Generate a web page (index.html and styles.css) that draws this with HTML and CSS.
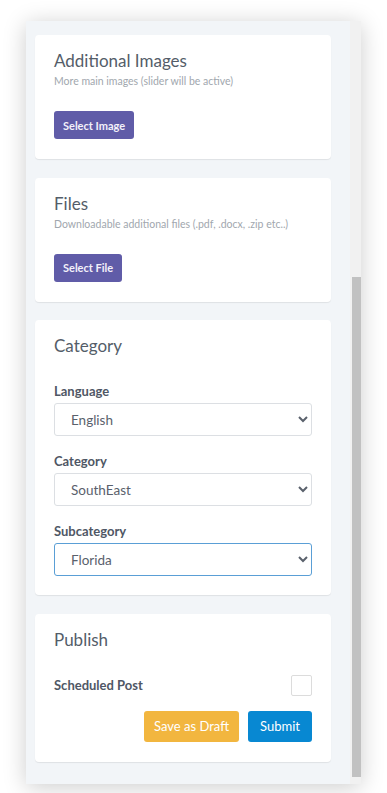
FILE: index.html
```html
<!DOCTYPE html>
<html lang="en">
<head>
<meta charset="utf-8">
<title>Post editor sidebar</title>
<link rel="stylesheet" href="styles.css">
</head>
<body>
<div class="frame">
  <div class="content">
    <section class="card">
      <h2 class="card-title">Additional Images</h2>
      <p class="card-sub">More main images (slider will be active)</p>
      <button class="btn btn-purple">Select Image</button>
    </section>
    <section class="card">
      <h2 class="card-title">Files</h2>
      <p class="card-sub">Downloadable additional files (.pdf, .docx, .zip etc..)</p>
      <button class="btn btn-purple">Select File</button>
    </section>
    <section class="card card-form">
      <h2 class="card-title">Category</h2>
      <div class="form-group first">
        <label class="label">Language</label>
        <select class="select"><option>English</option></select>
      </div>
      <div class="form-group">
        <label class="label">Category</label>
        <select class="select"><option>SouthEast</option></select>
      </div>
      <div class="form-group">
        <label class="label">Subcategory</label>
        <select class="select focused"><option>Florida</option></select>
      </div>
    </section>
    <section class="card">
      <h2 class="card-title">Publish</h2>
      <div class="check-row">
        <span class="label">Scheduled Post</span>
        <span class="checkbox"></span>
      </div>
      <div class="actions">
        <button class="btn-lg btn-yellow">Save as Draft</button>
        <button class="btn-lg btn-blue">Submit</button>
      </div>
    </section>
  </div>
  <div class="scrollbar"><div class="thumb"></div></div>
</div>
</body>
</html>
```

FILE: styles.css
```css
* { box-sizing: border-box; }
html, body { margin: 0; padding: 0; background: #ffffff; }
body { font-family: Lato, "Noto Sans", sans-serif; width: 387px; height: 793px; overflow: hidden; }

.frame {
  margin: 21px 0 0 26px;
  width: 335px;
  height: 763px;
  display: flex;
  background: #f2f5f8;
  box-shadow: 0 3px 22px rgba(0, 0, 0, 0.2);
  overflow: hidden;
}

.content {
  flex: 1;
  padding: 14px 19px 0 9px;
  display: flex;
  flex-direction: column;
  gap: 18.5px;
}

.scrollbar {
  width: 11px;
  background: #f1f1f1;
  padding-top: 256px;
  display: flex;
  justify-content: flex-end;
}
.thumb { width: 9px; height: 500px; background: #c1c1c1; }

.card {
  background: #ffffff;
  border-radius: 4px;
  box-shadow: 0 1px 1px rgba(0, 0, 0, 0.08);
  padding: 15px 19px 20px;
  flex-shrink: 0;
}
.card-form { padding-bottom: 19px; }

.card-title {
  margin: 0;
  font-size: 17px;
  line-height: 22px;
  font-weight: 400;
  color: #545d69;
}
.card-sub {
  margin: 2px 0 0;
  font-size: 10.5px;
  line-height: 14px;
  color: #a1a7ae;
}

.btn {
  display: block;
  margin-top: 23px;
  height: 28px;
  padding: 0 9px;
  border: none;
  border-radius: 3px;
  font-family: inherit;
  font-size: 11px;
  font-weight: 700;
  color: #f3f1fa;
}
.btn-purple { background: #605ca8; }

.form-group { margin-top: 15px; }
.form-group.first { margin-top: 24px; }

.label {
  display: block;
  font-size: 13px;
  line-height: 20px;
  font-weight: 700;
  color: #4f5765;
  margin-bottom: 2px;
}
.select {
  display: block;
  width: 100%;
  height: 33px;
  padding: 0 10px 0 12px;
  border: 1px solid #dcdfe3;
  border-radius: 3px;
  background: #ffffff;
  font-family: inherit;
  font-size: 13.5px;
  color: #5a616c;
}
.select.focused { border-color: #5a9fd6; }

.check-row {
  margin-top: 24px;
  display: flex;
  align-items: center;
  justify-content: space-between;
}
.check-row .label { margin: 0; }
.checkbox {
  width: 21px;
  height: 21px;
  border: 1px solid #dcdcdc;
  border-radius: 2px;
  background: #fff;
}

.actions {
  margin-top: 15px;
  display: flex;
  justify-content: flex-end;
  gap: 9px;
}
.btn-lg {
  height: 31px;
  padding: 0 12px;
  border: none;
  border-radius: 3px;
  font-family: inherit;
  font-size: 13px;
  font-weight: 400;
  color: #ffffff;
  white-space: nowrap;
}
.btn-yellow { background: #f2b63f; padding: 0 10px; }
.btn-blue { background: #0888d2; }
```
